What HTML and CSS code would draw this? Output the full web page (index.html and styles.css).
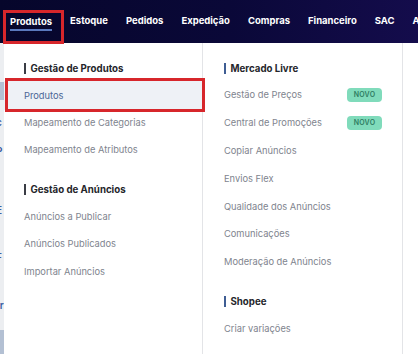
FILE: index.html
```html
<!DOCTYPE html>
<html lang="pt-BR">
<head>
<meta charset="utf-8">
<title>Menu Produtos</title>
<link rel="stylesheet" href="styles.css">
</head>
<body>
<header class="topbar">
  <nav class="nav">
    <a class="nav-item active">Produtos</a>
    <a class="nav-item">Estoque</a>
    <a class="nav-item">Pedidos</a>
    <a class="nav-item">Expedição</a>
    <a class="nav-item">Compras</a>
    <a class="nav-item">Financeiro</a>
    <a class="nav-item">SAC</a>
    <a class="nav-item">Anúncios</a>
  </nav>
</header>
<div class="stage">
  <div class="behind">
    <div class="bh-block b1"></div>
    <div class="bh-char c1">c</div>
    <div class="bh-char c2">P</div>
    <div class="bh-char c3">E</div>
    <div class="bh-char c4">F</div>
    <div class="bh-char c5">Ir</div>
    <div class="bh-block b2"></div>
  </div>
  <div class="menu">
    <div class="col">
      <div class="heading">Gestão de Produtos</div>
      <a class="item selected">Produtos</a>
      <a class="item">Mapeamento de Categorias</a>
      <a class="item">Mapeamento de Atributos</a>
      <div class="heading gap">Gestão de Anúncios</div>
      <a class="item">Anúncios a Publicar</a>
      <a class="item">Anúncios Publicados</a>
      <a class="item">Importar Anúncios</a>
    </div>
    <div class="col">
      <div class="heading blue">Mercado Livre</div>
      <a class="item">Gestão de Preços <span class="badge">NOVO</span></a>
      <a class="item">Central de Promoções <span class="badge">NOVO</span></a>
      <a class="item">Copiar Anúncios</a>
      <a class="item">Envios Flex</a>
      <a class="item">Qualidade dos Anúncios</a>
      <a class="item">Comunicações</a>
      <a class="item">Moderação de Anúncios</a>
      <div class="heading blue gap">Shopee</div>
      <a class="item">Criar variações</a>
    </div>
    <div class="col-rest"></div>
  </div>
</div>
<div class="mark mark-nav"></div>
<div class="mark mark-row"></div>
</body>
</html>
```
FILE: styles.css
```css
* { box-sizing: border-box; margin: 0; padding: 0; }
html, body { width: 418px; height: 354px; overflow: hidden; }
body {
  font-family: "Inter", "Noto Sans", sans-serif;
  background: #ffffff;
  position: relative;
}
a { text-decoration: none; }

.topbar {
  height: 43px;
  background: linear-gradient(90deg, #06062b 0%, #0a0838 55%, #140c4c 100%);
  overflow: hidden;
}
.nav {
  display: flex;
  height: 43px;
  align-items: center;
  padding-left: 10px;
  white-space: nowrap;
}
.nav-item {
  color: #ffffff;
  font-size: 9.5px;
  font-weight: 700;
  margin-right: 18px;
  padding-top: 1px;
  line-height: 14px;
  border-bottom: 2px solid transparent;
}
.nav-item.active {
  border-bottom-color: #5a78bd;
  padding-top: 3px;
}

.stage {
  display: flex;
  height: 311px;
}
.behind {
  width: 4px;
  background: #eceef1;
  overflow: hidden;
  display: flex;
  flex-direction: column;
  color: #3b5fa3;
  font-size: 10px;
  font-weight: 600;
}
.bh-block { background: #b3c0d3; flex: none; }
.b1 { height: 18px; margin-top: 39px; }
.b2 { height: 24px; margin-top: auto; }
.bh-char { line-height: 12px; margin-left: -4px; }
.c1 { margin-top: 16px; }
.c2 { margin-top: 17px; }
.c3 { margin-top: 47px; }
.c4 { margin-top: 35px; }
.c5 { margin-top: 36px; margin-left: -3px; }

.menu {
  flex: 1;
  display: flex;
  background: #ffffff;
}
.col {
  width: 200px;
  border-right: 1px solid #e3e4e7;
  padding-top: 15px;
  display: flex;
  flex-direction: column;
}
.col:first-child { width: 199px; }
.col-rest { flex: 1; }

.heading {
  height: 20px;
  display: flex;
  align-items: center;
  font-size: 9.7px;
  font-weight: 700;
  color: #25262b;
  padding-left: 20px;
  margin-bottom: 3px;
}
.heading::before {
  content: "";
  width: 1.5px;
  height: 11px;
  background: #3a3d45;
  margin-right: 5px;
}
.heading.blue::before { background: #3f5d93; }
.col:nth-child(2) .heading { padding-left: 21px; }
.heading.gap { margin-top: 16px; }

.item {
  height: 27.5px;
  display: flex;
  align-items: center;
  padding-left: 20px;
  font-size: 9.3px;
  color: #80848e;
}
.col:nth-child(2) .item { height: 27.8px; padding-left: 21px; padding-right: 20px; justify-content: space-between; }
.item.selected {
  height: 29px;
  margin-bottom: -1.5px;
  background: #eef1f6;
  color: #4a6595;
}
.badge {
  width: 35px;
  height: 14px;
  border-radius: 4px;
  background: #80dbbb;
  color: #2f7d62;
  font-size: 7px;
  font-weight: 600;
  display: flex;
  align-items: center;
  justify-content: center;
  letter-spacing: 0.2px;
}

.mark {
  position: absolute;
  border: 3px solid #d7262b;
  pointer-events: none;
}
.mark-nav { left: 3px; top: 10px; width: 61px; height: 34px; }
.mark-row { left: 5px; top: 78px; width: 200px; height: 34px; }
```
